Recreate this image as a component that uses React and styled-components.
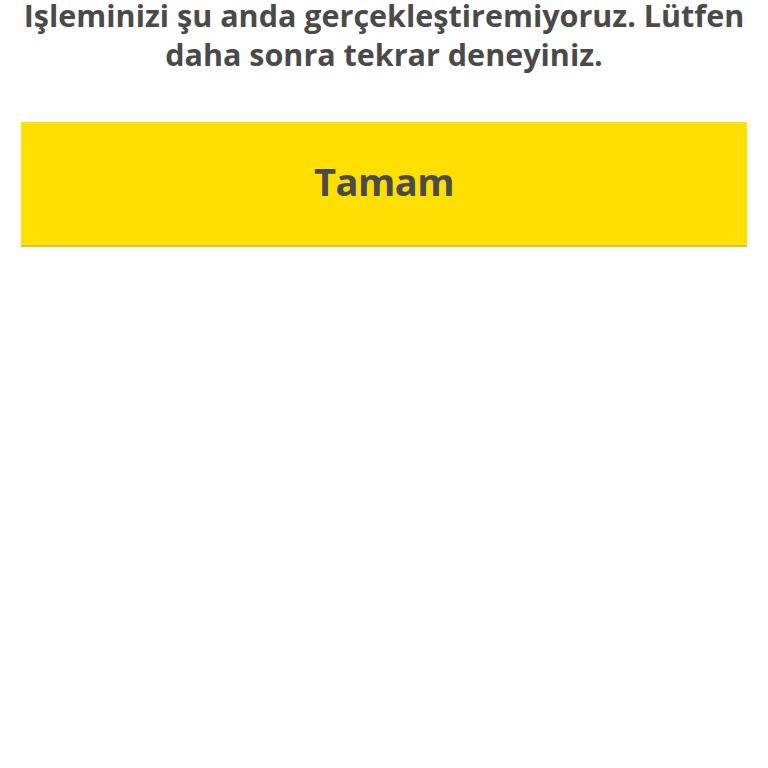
import React from "react"
import styled, { createGlobalStyle } from "styled-components"

const GlobalStyle = createGlobalStyle`
	html, body {
		margin: 0;
		padding: 0;
		background: #ffffff;
	}
	body {
		font-family: "Open Sans", "Liberation Sans", sans-serif;
	}
`

const Wrapper = styled.div`
	display: flex;
	flex-direction: column;
	align-items: stretch;
	padding: 0 21px;
	min-height: 768px;
	background: #ffffff;
`

const Message = styled.p`
	margin: -4px 0 0;
	text-align: center;
	font-size: 30.5px;
	font-weight: 700;
	line-height: 39px;
	color: #4a4a4a;
`

const OkButton = styled.button`
	margin-top: 48px;
	height: 125px;
	border: none;
	border-bottom: 2px solid #d9c23a;
	background: #ffdf00;
	color: #4a4a4a;
	font-family: inherit;
	font-size: 38px;
	font-weight: 700;
	letter-spacing: -0.5px;
	cursor: pointer;
	padding: 0 0 6px;
`

function App() {
	return (
		<>
			<GlobalStyle />
			<Wrapper>
				<Message>
					Işleminizi şu anda gerçekleştiremiyoruz. Lütfen daha sonra tekrar deneyiniz.
				</Message>
				<OkButton>Tamam</OkButton>
			</Wrapper>
		</>
	)
}

export default App
